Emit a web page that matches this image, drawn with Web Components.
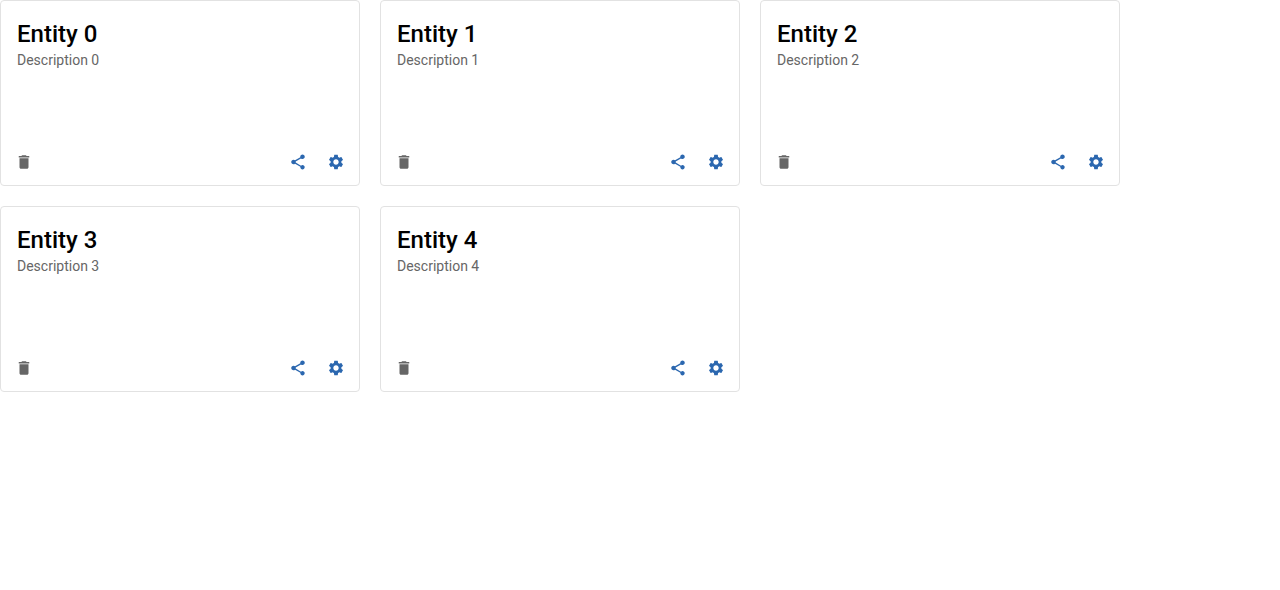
<!DOCTYPE html>
<html lang="en">
<head>
<meta charset="utf-8">
<title>Entities</title>
<style>
  body { margin: 0; background: #fff; font-family: Roboto, "Liberation Sans", sans-serif; }
</style>
</head>
<body>
<entity-grid>
  <entity-card><span slot="title">Entity 0</span><span slot="description">Description 0</span></entity-card>
  <entity-card><span slot="title">Entity 1</span><span slot="description">Description 1</span></entity-card>
  <entity-card><span slot="title">Entity 2</span><span slot="description">Description 2</span></entity-card>
  <entity-card><span slot="title">Entity 3</span><span slot="description">Description 3</span></entity-card>
  <entity-card><span slot="title">Entity 4</span><span slot="description">Description 4</span></entity-card>
</entity-grid>

<template id="grid-template">
  <style>
    :host { display: grid; grid-template-columns: repeat(auto-fill, 360px); gap: 20px; }
  </style>
  <slot></slot>
</template>

<template id="card-template">
  <style>
    :host {
      display: flex; flex-direction: column; justify-content: space-between;
      box-sizing: border-box; min-height: 186px; padding: 16px 8px 8px 8px;
      border: 1px solid #e2e2e2; border-radius: 4px; background: #fff;
    }
    header { padding: 0 8px; }
    h2 { margin: 0; font-size: 24px; line-height: 34px; font-weight: 500; color: #000; }
    p { margin: 0; font-size: 14px; line-height: 18px; color: #666; }
    footer { display: flex; align-items: center; gap: 8px; }
    .spacer { flex: 1; }
  </style>
  <header>
    <h2><slot name="title"></slot></h2>
    <p><slot name="description"></slot></p>
  </header>
  <footer>
    <icon-button icon="delete" label="Delete"></icon-button>
    <span class="spacer"></span>
    <icon-button icon="share" label="Share"></icon-button>
    <icon-button icon="settings" label="Settings"></icon-button>
  </footer>
</template>

<template id="icon-button-template">
  <style>
    :host { display: block; color: #2b67af; }
    :host([icon="delete"]) { color: #666; }
    button {
      display: flex; align-items: center; justify-content: center;
      width: 30px; height: 30px; padding: 0; border: 0; border-radius: 50%;
      background: none; color: inherit; cursor: pointer;
    }
    button:hover { background: #f2f2f2; }
    svg { display: block; width: 18px; height: 18px; fill: currentColor; }
  </style>
  <button type="button"><svg viewBox="0 0 24 24" aria-hidden="true"><path></path></svg></button>
</template>

<script>
  const icons = {
    delete: "M6 19c0 1.1.9 2 2 2h8c1.1 0 2-.9 2-2V7H6v12zM19 4h-3.5l-1-1h-5l-1 1H5v2h14V4z",
    share: "M18 16.08c-.76 0-1.44.3-1.96.77L8.91 12.7c.05-.23.09-.46.09-.7s-.04-.47-.09-.7l7.05-4.11c.54.5 1.25.81 2.04.81 1.66 0 3-1.34 3-3s-1.34-3-3-3-3 1.34-3 3c0 .24.04.47.09.7L8.04 9.81C7.5 9.31 6.79 9 6 9c-1.66 0-3 1.34-3 3s1.34 3 3 3c.79 0 1.5-.31 2.04-.81l7.12 4.16c-.05.21-.08.43-.08.65 0 1.61 1.31 2.92 2.92 2.92s2.92-1.31 2.92-2.92-1.31-2.92-2.92-2.92z",
    settings: "M19.14 12.94c.04-.3.06-.61.06-.94 0-.32-.02-.64-.07-.94l2.03-1.58c.18-.14.23-.41.12-.61l-1.92-3.32c-.12-.22-.37-.29-.59-.22l-2.39.96c-.5-.38-1.03-.7-1.62-.94l-.36-2.54c-.04-.24-.24-.41-.48-.41h-3.84c-.24 0-.43.17-.47.41l-.36 2.54c-.59.24-1.13.57-1.62.94l-2.39-.96c-.22-.08-.47 0-.59.22L2.74 8.87c-.12.21-.08.47.12.61l2.03 1.58c-.05.3-.09.63-.09.94s.02.64.07.94l-2.03 1.58c-.18.14-.23.41-.12.61l1.92 3.32c.12.22.37.29.59.22l2.39-.96c.5.38 1.03.7 1.62.94l.36 2.54c.05.24.24.41.48.41h3.84c.24 0 .44-.17.47-.41l.36-2.54c.59-.24 1.13-.56 1.62-.94l2.39.96c.22.08.47 0 .59-.22l1.92-3.32c.12-.22.07-.47-.12-.61l-2.01-1.58zM12 15.6c-1.98 0-3.6-1.62-3.6-3.6s1.62-3.6 3.6-3.6 3.6 1.62 3.6 3.6-1.62 3.6-3.6 3.6z"
  };

  function attach(host, templateId) {
    const root = host.attachShadow({ mode: "open" });
    root.append(document.getElementById(templateId).content.cloneNode(true));
    return root;
  }

  customElements.define("icon-button", class extends HTMLElement {
    connectedCallback() {
      if (this.shadowRoot) return;
      const root = attach(this, "icon-button-template");
      root.querySelector("path").setAttribute("d", icons[this.getAttribute("icon")]);
      root.querySelector("button").setAttribute("aria-label", this.getAttribute("label"));
    }
  });

  customElements.define("entity-card", class extends HTMLElement {
    constructor() { super(); attach(this, "card-template"); }
  });

  customElements.define("entity-grid", class extends HTMLElement {
    constructor() { super(); attach(this, "grid-template"); }
  });
</script>
</body>
</html>
